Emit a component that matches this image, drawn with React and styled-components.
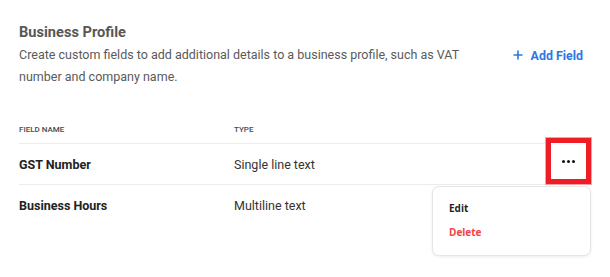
import React from 'react';
import styled, { createGlobalStyle } from 'styled-components';

const GlobalStyle = createGlobalStyle`
  body {
    margin: 0;
    background: #fff;
    font-family: Roboto, "Liberation Sans", sans-serif;
  }
`;

const Page = styled.div`
  width: 572px;
  min-height: 256px;
  padding: 21px 19px 0 19px;
`;

const Title = styled.h2`
  margin: 0;
  font-size: 14.6px;
  line-height: 22px;
  font-weight: 700;
  color: #575757;
`;

const Intro = styled.div`
  display: flex;
  justify-content: space-between;
  align-items: flex-start;
  padding-right: 8px;
`;

const Description = styled.p`
  margin: 1px 0 0;
  width: 460px;
  font-size: 12.5px;
  line-height: 22px;
  color: #5a5a5a;
`;

const AddButton = styled.button`
  display: flex;
  align-items: center;
  gap: 8px;
  margin-top: 1px;
  padding: 0;
  height: 22px;
  border: none;
  background: none;
  font-family: Roboto, "Liberation Sans", sans-serif;
  font-size: 12.4px;
  font-weight: 700;
  color: #2b78e4;
  cursor: pointer;
`;

const Table = styled.div`
  margin-top: 27px;
`;

const Row = styled.div`
  display: grid;
  grid-template-columns: 215px 1fr 60px;
  align-items: center;
  height: ${p => (p.$head ? '28px' : '40px')};
  border-bottom: 1px solid ${p => (p.$last ? 'transparent' : '#ececec')};
`;

const HeadCell = styled.div`
  font-size: 8px;
  font-weight: 500;
  color: #4a4a4a;
  text-transform: uppercase;
`;

const NameCell = styled.div`
  font-size: 12.5px;
  font-weight: 700;
  color: #222;
`;

const TypeCell = styled.div`
  font-size: 12.5px;
  color: #333;
`;

const ActionCell = styled.div`
  position: relative;
  display: flex;
  justify-content: flex-start;
  height: 100%;
`;

const DotsButton = styled.button`
  position: relative;
  width: 55px;
  height: 46px;
  margin-top: -6px;
  margin-left: 15px;
  display: flex;
  align-items: center;
  justify-content: center;
  gap: 2px;
  padding: 0;
  background: #fff;
  border: 5px solid #ee1c25;
  box-shadow: 0 0 0 1px #f7a0a4;
  box-sizing: border-box;
  cursor: pointer;
`;

const Dot = styled.span`
  width: 3px;
  height: 3px;
  border-radius: 50%;
  background: #111;
`;

const Menu = styled.div`
  position: absolute;
  top: 42px;
  right: 0;
  width: 159px;
  height: 70px;
  box-sizing: border-box;
  padding: 12px 16px;
  background: #fff;
  border: 1px solid #e6e6e6;
  border-radius: 7px;
  box-shadow: 0 1px 3px rgba(0, 0, 0, 0.08);
  display: flex;
  flex-direction: column;
  gap: 6px;
  z-index: 2;
`;

const MenuItem = styled.div`
  font-family: "Open Sans", "Noto Sans", sans-serif;
  font-size: 10px;
  font-weight: 700;
  line-height: 18px;
  color: ${p => (p.$danger ? '#f0434b' : '#1e1e1e')};
`;

const PlusIcon = () => (
  <svg width="10" height="10" viewBox="0 0 10 10">
    <path d="M5 0.5v9M0.5 5h9" stroke="#2b78e4" strokeWidth="1.6" />
  </svg>
);

const fields = [
  { name: 'GST Number', type: 'Single line text', open: true },
  { name: 'Business Hours', type: 'Multiline text' },
];

const App = () => {
  return (
    <Page>
      <GlobalStyle />
      <Title>Business Profile</Title>
      <Intro>
        <Description>
          Create custom fields to add additional details to a business profile, such as VAT number and company name.
        </Description>
        <AddButton>
          <PlusIcon />
          Add Field
        </AddButton>
      </Intro>
      <Table>
        <Row $head>
          <HeadCell>Field Name</HeadCell>
          <HeadCell>Type</HeadCell>
          <div />
        </Row>
        {fields.map((f, i) => (
          <Row key={f.name} $last={i === fields.length - 1}>
            <NameCell>{f.name}</NameCell>
            <TypeCell>{f.type}</TypeCell>
            <ActionCell>
              {f.open && (
                <>
                  <DotsButton>
                    <Dot />
                    <Dot />
                    <Dot />
                  </DotsButton>
                  <Menu>
                    <MenuItem>Edit</MenuItem>
                    <MenuItem $danger>Delete</MenuItem>
                  </Menu>
                </>
              )}
            </ActionCell>
          </Row>
        ))}
      </Table>
    </Page>
  );
};

export default App;
